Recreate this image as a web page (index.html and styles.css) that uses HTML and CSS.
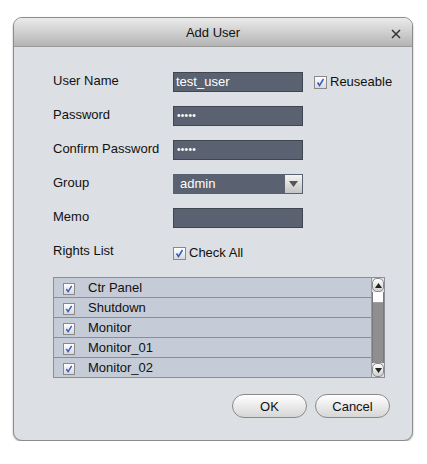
FILE: index.html
```html
<!DOCTYPE html>
<html lang="en">
<head>
    <meta charset="UTF-8">
    <title>Add User</title>
    <link rel="stylesheet" href="styles.css">
</head>
<body>
    <div class="dialog">
        <div class="titlebar">
            <span class="title">Add User</span>
            <svg class="close" width="10" height="10" viewBox="0 0 10 10">
                <path d="M1 1L9 9M9 1L1 9" stroke="#333" stroke-width="1.5" fill="none"/>
            </svg>
        </div>
        <div class="content">
            <div class="form">
                <span class="label">User Name</span>
                <div class="field">test_user</div>
                <label class="check extra"><span class="box"><svg width="9" height="9" viewBox="0 0 9 9"><path d="M1.5 4.5L3.5 7.5L7.5 1" stroke="#3a5fc4" stroke-width="1.6" fill="none"/></svg></span>Reuseable</label>

                <span class="label">Password</span>
                <div class="field dots">•••••</div>
                <span></span>

                <span class="label">Confirm Password</span>
                <div class="field dots">•••••</div>
                <span></span>

                <span class="label">Group</span>
                <div class="field select">
                    <span class="value">admin</span>
                    <span class="arrow"><svg width="9" height="6" viewBox="0 0 9 6"><path d="M0 0H9L4.5 6Z" fill="#555"/></svg></span>
                </div>
                <span></span>

                <span class="label">Memo</span>
                <div class="field"></div>
                <span></span>

                <span class="label">Rights List</span>
                <label class="check"><span class="box"><svg width="9" height="9" viewBox="0 0 9 9"><path d="M1.5 4.5L3.5 7.5L7.5 1" stroke="#3a5fc4" stroke-width="1.6" fill="none"/></svg></span>Check All</label>
                <span></span>
            </div>

            <div class="list">
                <div class="rows">
                    <div class="row"><span class="box small"><svg width="8" height="8" viewBox="0 0 9 9"><path d="M1.5 4.5L3.5 7.5L7.5 1" stroke="#3a5fc4" stroke-width="1.6" fill="none"/></svg></span><span>Ctr Panel</span></div>
                    <div class="row"><span class="box small"><svg width="8" height="8" viewBox="0 0 9 9"><path d="M1.5 4.5L3.5 7.5L7.5 1" stroke="#3a5fc4" stroke-width="1.6" fill="none"/></svg></span><span>Shutdown</span></div>
                    <div class="row"><span class="box small"><svg width="8" height="8" viewBox="0 0 9 9"><path d="M1.5 4.5L3.5 7.5L7.5 1" stroke="#3a5fc4" stroke-width="1.6" fill="none"/></svg></span><span>Monitor</span></div>
                    <div class="row"><span class="box small"><svg width="8" height="8" viewBox="0 0 9 9"><path d="M1.5 4.5L3.5 7.5L7.5 1" stroke="#3a5fc4" stroke-width="1.6" fill="none"/></svg></span><span>Monitor_01</span></div>
                    <div class="row"><span class="box small"><svg width="8" height="8" viewBox="0 0 9 9"><path d="M1.5 4.5L3.5 7.5L7.5 1" stroke="#3a5fc4" stroke-width="1.6" fill="none"/></svg></span><span>Monitor_02</span></div>
                </div>
                <div class="scrollbar">
                    <span class="sb-btn"><svg width="7" height="5" viewBox="0 0 7 5"><path d="M0 5H7L3.5 0Z" fill="#222"/></svg></span>
                    <div class="track"><span class="thumb"></span></div>
                    <span class="sb-btn"><svg width="7" height="5" viewBox="0 0 7 5"><path d="M0 0H7L3.5 5Z" fill="#222"/></svg></span>
                </div>
            </div>

            <div class="buttons">
                <button class="btn">OK</button>
                <button class="btn">Cancel</button>
            </div>
        </div>
    </div>
</body>
</html>
```

FILE: styles.css
```css
body {
    margin: 0;
    background-color: #ffffff;
    font-family: "Liberation Sans", Arial, sans-serif;
    font-size: 13px;
    color: #111111;
}

.dialog {
    margin: 17px 0 0 13px;
    width: 398px;
    height: 422px;
    background-color: #dcdfe3;
    border: 1px solid #8c8c8c;
    border-radius: 9px;
    box-shadow: 0 1px 2px rgba(0, 0, 0, 0.35);
    overflow: hidden;
}

.titlebar {
    height: 28px;
    display: flex;
    align-items: center;
    justify-content: center;
    position: relative;
    background: linear-gradient(#ebebeb, #b4b4b4);
    border-bottom: 1px solid #9a9a9a;
}

.title {
    padding-top: 1px;
}

.close {
    position: absolute;
    right: 11px;
    top: 11px;
}

.content {
    padding: 25px 22px 0 39px;
}

.form {
    display: grid;
    grid-template-columns: 120px 141px auto;
    grid-auto-rows: 20px;
    row-gap: 14px;
    align-items: center;
}

.label {
    padding-bottom: 4px;
}

.field {
    width: 130px;
    height: 20px;
    box-sizing: border-box;
    background-color: #5a6272;
    border: 1px solid #40464f;
    color: #ffffff;
    padding: 0 0 0 2px;
    line-height: 18px;
}

.dots {
    font-size: 10px;
    letter-spacing: 0.3px;
    padding-left: 3px;
}

.select {
    display: flex;
    justify-content: space-between;
    border-color: #5a6272;
    padding-left: 6px;
}

.arrow {
    width: 17px;
    height: 18px;
    display: flex;
    align-items: center;
    justify-content: center;
    background: linear-gradient(#f4f4f4, #c4c4c4);
}

.check {
    display: flex;
    align-items: center;
    gap: 3px;
}

.extra {
    margin-top: -2px;
}

.box {
    width: 11px;
    height: 11px;
    border: 1px solid #8a8a8a;
    background: linear-gradient(#ffffff, #d8d8d8);
    display: inline-flex;
    align-items: center;
    justify-content: center;
    margin-top: 3px;
}

.box.small {
    width: 10px;
    height: 10px;
    margin-top: 2px;
}

.list {
    margin-top: 15px;
    width: 330px;
    height: 99px;
    border: 1px solid #8c8f96;
    display: flex;
    background-color: #c5cbd7;
}

.rows {
    flex: 1;
}

.row {
    height: 19px;
    border-bottom: 1px solid #8a8e97;
    display: flex;
    align-items: center;
    gap: 13px;
    padding-left: 9px;
}

.row:last-child {
    border-bottom: none;
}

.scrollbar {
    width: 12px;
    border-left: 1px solid #9a9a9a;
    display: flex;
    flex-direction: column;
    background-color: #e2e2e2;
}

.sb-btn {
    height: 12px;
    display: flex;
    align-items: center;
    justify-content: center;
    background: linear-gradient(#ffffff, #cfcfcf);
    border-radius: 5px;
    border: 1px solid #8a8a8a;
}

.track {
    flex: 1;
    background-color: #8f8f8f;
    border-left: 1px solid #7a7a7a;
    border-right: 1px solid #7a7a7a;
}

.thumb {
    display: block;
    height: 10px;
    background: #ffffff;
    border-bottom: 1px solid #a0a0a0;
}

.buttons {
    display: flex;
    justify-content: flex-end;
    gap: 8px;
    margin-top: 16px;
}

.btn {
    width: 75px;
    height: 24px;
    border-radius: 12px;
    border: 1px solid #8a8a8a;
    background: linear-gradient(#ffffff, #d6d6d6);
    font-family: "Liberation Sans", Arial, sans-serif;
    font-size: 13px;
    color: #111111;
    padding: 0;
}
```
